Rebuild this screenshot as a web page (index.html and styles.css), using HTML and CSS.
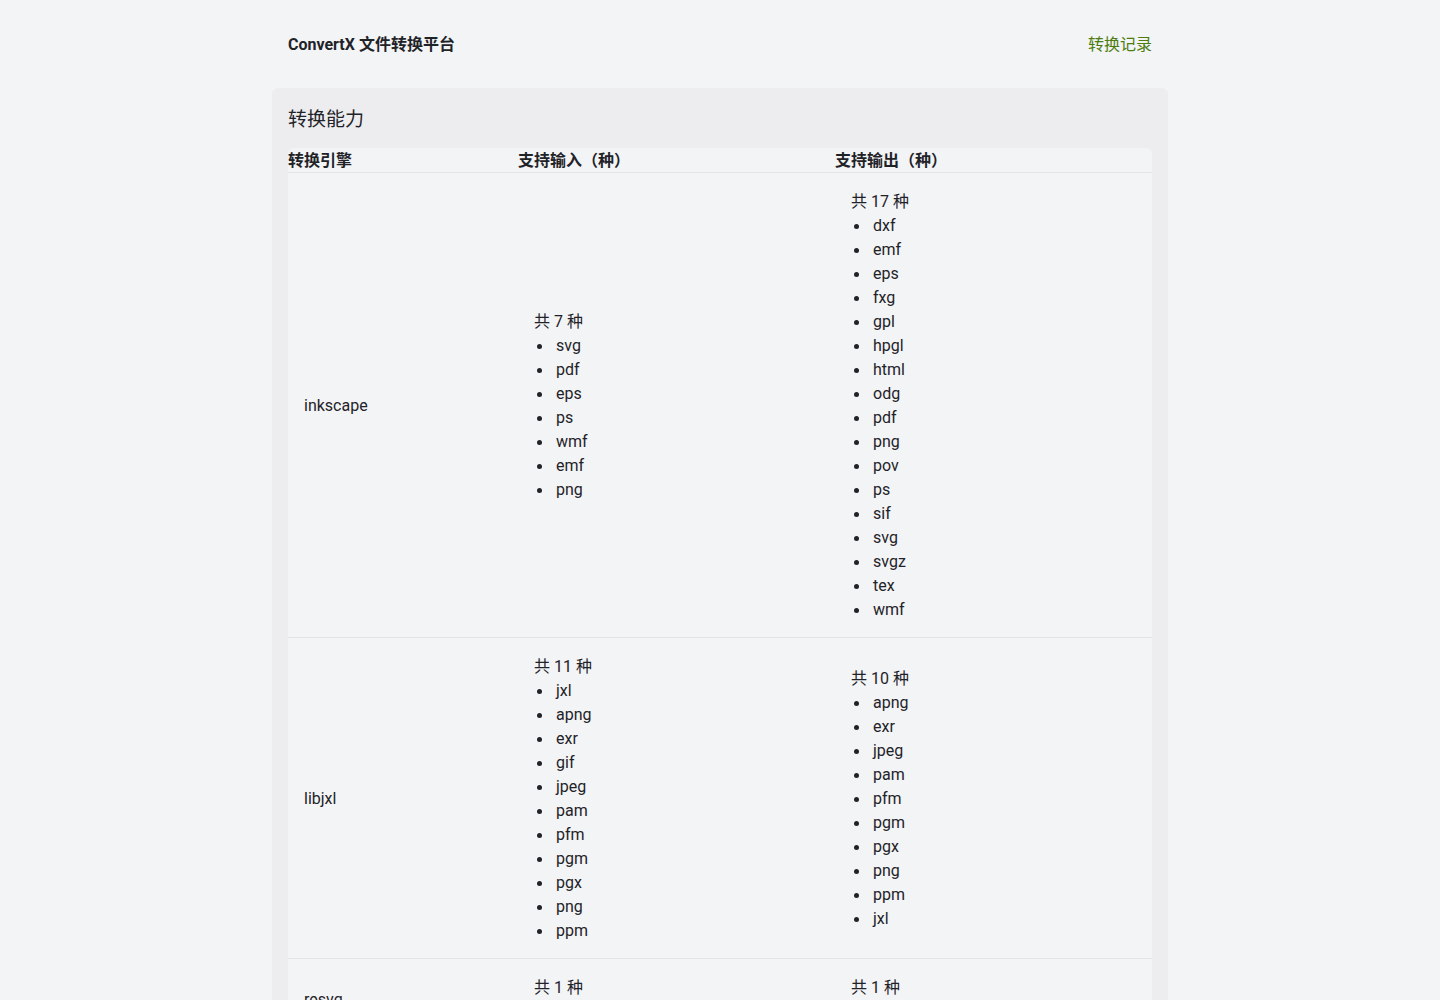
FILE: index.html
```html
<!DOCTYPE html>
<html lang="zh-CN">

<head>
  <meta charset="UTF-8">
  <meta name="viewport" content="width=device-width, initial-scale=1.0">
  <title>ConvertX 文件转换平台</title>
  <link rel="stylesheet" href="styles.css">
</head>

<body>
  <div class="page">
    <header class="topbar">
      <span class="brand">ConvertX 文件转换平台</span>
      <a class="nav-link" href="#">转换记录</a>
    </header>

    <main class="card">
      <h2 class="card-title">转换能力</h2>
      <table class="converters">
        <colgroup>
          <col class="col-engine">
          <col class="col-io">
          <col class="col-io">
        </colgroup>
        <thead>
          <tr>
            <th>转换引擎</th>
            <th>支持输入（种）</th>
            <th>支持输出（种）</th>
          </tr>
        </thead>
        <tbody>
          <tr>
            <td>inkscape</td>
            <td>
              <div class="count">共 7 种</div>
              <ul class="formats">
                <li>svg</li><li>pdf</li><li>eps</li><li>ps</li><li>wmf</li><li>emf</li><li>png</li>
              </ul>
            </td>
            <td>
              <div class="count">共 17 种</div>
              <ul class="formats">
                <li>dxf</li><li>emf</li><li>eps</li><li>fxg</li><li>gpl</li><li>hpgl</li><li>html</li><li>odg</li><li>pdf</li>
                <li>png</li><li>pov</li><li>ps</li><li>sif</li><li>svg</li><li>svgz</li><li>tex</li><li>wmf</li>
              </ul>
            </td>
          </tr>
          <tr>
            <td>libjxl</td>
            <td>
              <div class="count">共 11 种</div>
              <ul class="formats">
                <li>jxl</li><li>apng</li><li>exr</li><li>gif</li><li>jpeg</li><li>pam</li><li>pfm</li><li>pgm</li><li>pgx</li><li>png</li><li>ppm</li>
              </ul>
            </td>
            <td>
              <div class="count">共 10 种</div>
              <ul class="formats">
                <li>apng</li><li>exr</li><li>jpeg</li><li>pam</li><li>pfm</li><li>pgm</li><li>pgx</li><li>png</li><li>ppm</li><li>jxl</li>
              </ul>
            </td>
          </tr>
          <tr>
            <td>resvg</td>
            <td>
              <div class="count">共 1 种</div>
              <ul class="formats">
                <li>svg</li>
              </ul>
            </td>
            <td>
              <div class="count">共 1 种</div>
              <ul class="formats">
                <li>png</li>
              </ul>
            </td>
          </tr>
        </tbody>
      </table>
    </main>
  </div>
</body>

</html>
```

FILE: styles.css
```css
html,
body {
  margin: 0;
  background: #f3f4f6;
  color: #1f2328;
  font-family: Roboto, "Noto Sans CJK SC", sans-serif;
  font-size: 16px;
  line-height: 24px;
}

.page {
  width: 896px;
  margin: 0 auto;
}

/* top navigation */
.topbar {
  display: flex;
  justify-content: space-between;
  align-items: center;
  padding: 33px 16px 31px;
}

.brand {
  font-weight: 700;
}

.nav-link {
  color: #4d7c0f;
  text-decoration: none;
}

/* capability card */
.card {
  background: #ededf0;
  border-radius: 6px;
  padding: 18px 16px 16px;
}

.card-title {
  margin: 0 0 14px;
  font-size: 19px;
  line-height: 28px;
  font-weight: 400;
}

.converters {
  width: 100%;
  table-layout: fixed;
  border-collapse: separate;
  border-spacing: 0;
  background: #f3f4f6;
  border-radius: 6px 6px 0 0;
}

.col-engine {
  width: 230px;
}

.converters th {
  text-align: left;
  padding: 1px 0 0;
  line-height: 23px;
  font-weight: 700;
  border-bottom: 1px solid #e3e4e8;
}

.converters td {
  padding: 17px 16px 15px;
  vertical-align: middle;
  border-bottom: 1px solid #e3e4e8;
}

.formats {
  margin: 0;
  padding-left: 22px;
  list-style: none;
}

.formats li {
  position: relative;
}

/* round bullet, placed left of the item text */
.formats li::before {
  content: '';
  position: absolute;
  left: -19px;
  top: 10px;
  width: 5px;
  height: 5px;
  border-radius: 50%;
  background: #1f2328;
}
```
